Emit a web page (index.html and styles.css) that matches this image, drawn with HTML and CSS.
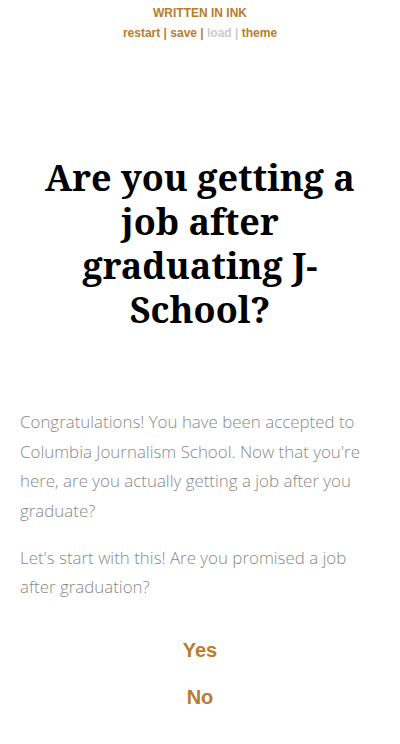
FILE: index.html
```html
<!DOCTYPE html>
<html lang="en">
<head>
<meta charset="utf-8">
<title>Are you getting a job after graduating J-School?</title>
<link rel="stylesheet" href="styles.css">
</head>
<body>
  <div class="topbar">
    <div class="written-in-ink">WRITTEN IN INK</div>
    <div class="controls">
      <a class="ctl">restart</a> | <a class="ctl">save</a> | <a class="ctl ctl-disabled">load</a> <span class="sep-disabled">|</span> <a class="ctl">theme</a>
    </div>
  </div>
  <div class="container">
    <header class="header">
      <h1 class="title">Are you getting a job after graduating J-School?</h1>
    </header>
    <div class="story">
      <p class="story-p">Congratulations! You have been accepted to Columbia Journalism School. Now that you're here, are you actually getting a job after you graduate?</p>
      <p class="story-p">Let's start with this! Are you promised a job after graduation?</p>
      <div class="choices">
        <p class="choice"><a class="choice-link">Yes</a></p>
        <p class="choice"><a class="choice-link">No</a></p>
      </div>
    </div>
  </div>
</body>
</html>
```
FILE: styles.css
```css
html, body {
  margin: 0;
  padding: 0;
  background: #ffffff;
}
body {
  font-family: "Open Sans", sans-serif;
  font-weight: 300;
}
.topbar {
  padding-top: 3px;
  padding-bottom: 6px;
  text-align: center;
  font-family: "Liberation Sans", Arial, sans-serif;
  font-size: 12px;
  font-weight: 700;
  line-height: 20px;
  color: #b97c2c;
}
.written-in-ink {
  color: #b97c2c;
}
.controls {
  color: #b97c2c;
}
.ctl {
  color: #b97c2c;
  text-decoration: none;
}
.ctl-disabled, .sep-disabled {
  color: #cccccc;
}
.container {
  max-width: 600px;
  margin: 0 auto;
  padding: 107px 20px 20px;
}
.header {
  padding-bottom: 48px;
}
.title {
  margin: 0 0 10px;
  text-align: center;
  font-family: "Noto Serif", "DejaVu Serif", serif;
  font-weight: 700;
  font-size: 36px;
  line-height: 44px;
  color: #000;
}
.story-p {
  margin: 17.33px 0;
  font-size: 16.9px;
  line-height: 29.47px;
  color: #888888;
  font-weight: 300;
}
.choices {
  display: flex;
  flex-direction: column;
  gap: 13px;
  margin-top: 32px;
}
.choice {
  margin: 0;
  text-align: center;
  font-size: 20px;
  line-height: 34px;
}
.choice-link {
  font-family: "Liberation Sans", Arial, sans-serif;
  font-weight: 700;
  color: #b97c2c;
  text-decoration: none;
}
```
